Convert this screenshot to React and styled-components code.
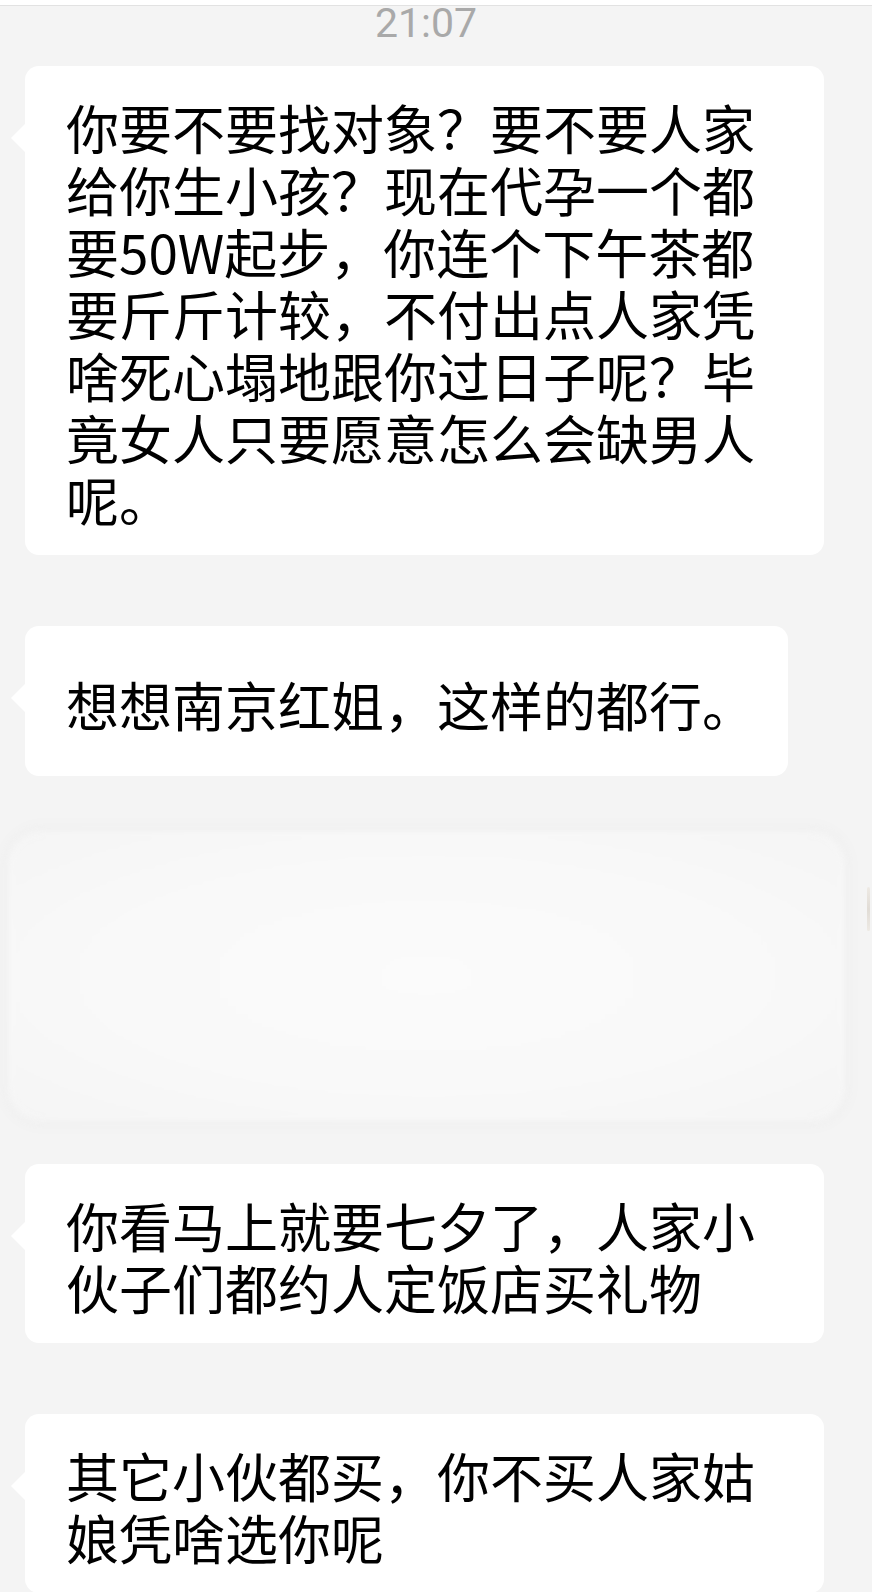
import React from "react";
import styled, { createGlobalStyle } from "styled-components";

const GlobalStyle = createGlobalStyle`
  html, body {
    margin: 0;
    padding: 0;
    background: #f4f4f4;
    overflow: hidden;
  }
`;

const Page = styled.div`
  width: 872px;
  height: 1592px;
  overflow: hidden;
  background: #f4f4f4;
  font-family: "Noto Sans CJK SC", "Noto Sans", sans-serif;
`;

const TopBar = styled.div`
  height: 5px;
  background: #ffffff;
  border-bottom: 1px solid #e2e2e2;
`;

const Time = styled.div`
  height: 70px;
  padding-right: 20px;
  margin-top: -10px;
  text-align: center;
  font-family: Roboto, "Liberation Sans", sans-serif;
  font-size: 41px;
  line-height: 54px;
  color: #a9a9a9;
`;

const Feed = styled.div`
  display: flex;
  flex-direction: column;
  align-items: flex-start;
  gap: 71px;
  padding-left: 25px;
`;

const Bubble = styled.div`
  position: relative;
  box-sizing: border-box;
  max-width: 799px;
  min-height: 150px;
  display: flex;
  flex-direction: column;
  justify-content: center;
  padding: 30px 33px 25px 41px;
  background: #ffffff;
  border-radius: 14px;
  font-size: 53px;
  line-height: 62px;
  color: #000000;

  &::before {
    content: "";
    position: absolute;
    left: -14px;
    top: 58px;
    border-right: 14px solid #ffffff;
    border-top: 14px solid transparent;
    border-bottom: 14px solid transparent;
  }
`;

const MediaRow = styled.div`
  align-self: stretch;
  display: flex;
  align-items: flex-start;
  margin: -16px 0 -28px -17px;
`;

const BlurCard = styled.div`
  width: 837px;
  height: 290px;
  border-radius: 34px;
  background: radial-gradient(ellipse at center, #fbfbfb 0%, #f9f9f9 55%, #f5f5f5 100%);
  box-shadow: 0 0 18px 6px rgba(0, 0, 0, 0.02);
  filter: blur(3px);
`;

const EdgeSliver = styled.div`
  width: 3px;
  height: 44px;
  margin: 56px 0 0 22px;
  border-radius: 2px;
  background: linear-gradient(#ece7e0, #dcd6ce, #ece7e0);
  opacity: 0.8;
`;

const messages = [
  "你要不要找对象？要不要人家给你生小孩？现在代孕一个都要50W起步，你连个下午茶都要斤斤计较，不付出点人家凭啥死心塌地跟你过日子呢？毕竟女人只要愿意怎么会缺男人呢。",
  "想想南京红姐，这样的都行。",
];

const laterMessages = [
  "你看马上就要七夕了，人家小伙子们都约人定饭店买礼物",
  "其它小伙都买，你不买人家姑娘凭啥选你呢",
];

export default function App() {
  return (
    <Page>
      <GlobalStyle />
      <TopBar />
      <Time>21:07</Time>
      <Feed>
        {messages.map((m, i) => (
          <Bubble key={"a" + i}>{m}</Bubble>
        ))}
        <MediaRow>
          <BlurCard />
          <EdgeSliver />
        </MediaRow>
        {laterMessages.map((m, i) => (
          <Bubble key={"b" + i}>{m}</Bubble>
        ))}
      </Feed>
    </Page>
  );
}
